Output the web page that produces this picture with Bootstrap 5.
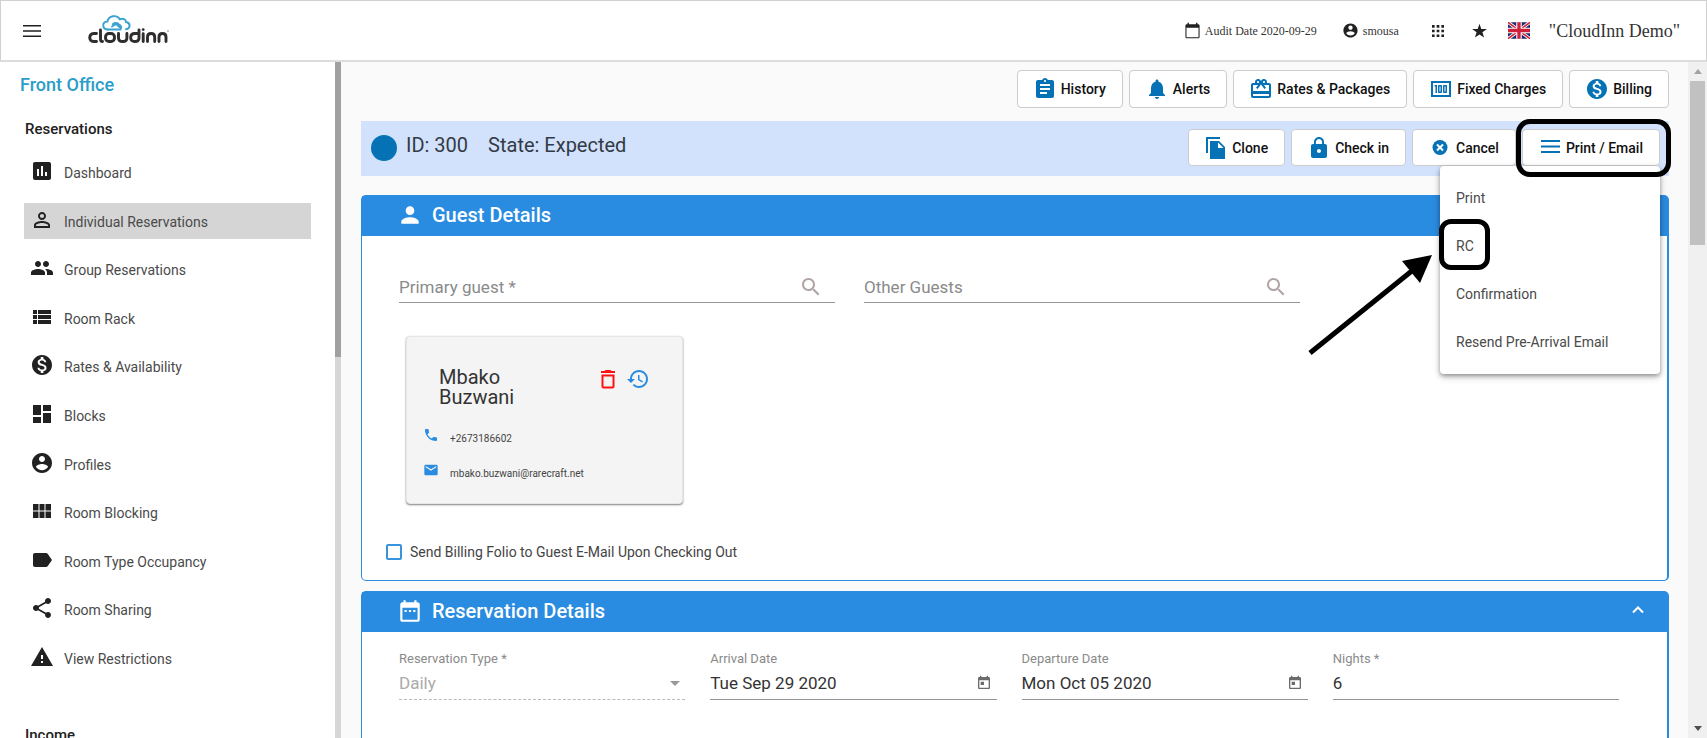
<!DOCTYPE html>
<html lang="en">
<head>
<meta charset="utf-8">
<meta name="viewport" content="width=device-width, initial-scale=1">
<title>CloudInn – Reservation 300</title>
<link href="https://cdn.jsdelivr.net/npm/bootstrap@5.3.0/dist/css/bootstrap.min.css" rel="stylesheet">
<style>
  :root { --brand: #2a8ce0; --deep: #0572b5; --ink: #212121; }
  body { font-family: Roboto, sans-serif; font-size: 14px; line-height: 20px; color: #4a4a4a; background: #fafafa; height: 100vh; overflow: hidden; }
  svg { fill: currentColor; flex: none; display: block; }
  a { color: inherit; text-decoration: none; }
  button { color: inherit; }

  /* top bar */
  .topbar { height: 62px; background: #fff; border: 1px solid #d0d0d0; border-bottom: 2px solid #dcdcdc; padding: 0 26px 0 19px; font-family: "Liberation Serif", serif; color: #333; }
  .plain { border: 0; background: none; padding: 0; }
  .topbar svg, .topbar .plain { color: var(--ink); }
  .tiny { font-size: 12px; line-height: 18px; }
  .brand-link { margin-left: 42px; }
  .usr { margin-left: 25px; }
  .apps { margin-left: 30px; }
  .star { margin-left: 24px; }
  .flag { margin-left: 20px; }
  .hotel { font-size: 18px; margin-left: 19px; }

  /* side menu */
  .side { width: 335px; background: #fff; overflow: hidden; }
  .side h1 { font-size: 18px; line-height: 24px; font-weight: 500; color: #2a9dc8; margin: 11px 0 0 20px; }
  .side h2 { font-size: 15px; line-height: 20px; font-weight: 500; color: var(--ink); margin: 22px 0 0 25px; }
  .side .income { margin-top: 49px; }
  .menu-list { padding: 0; margin: 15px 24px 0; list-style: none; height: 522px; display: flex; flex-direction: column; justify-content: space-between; }
  .menu-list a { display: flex; align-items: center; gap: 10px; height: 36px; padding: 2px 6px 0; }
  .menu-list a.on { background: #d5d5d5; }
  .menu-list svg { color: var(--ink); margin-top: -4px; }
  .rail { width: 6px; background: #d6d6d6; }
  .rail div { height: 295px; background: #a0a0a0; }
  .scroller { width: 19px; background: #f0f0f0; padding: 0 2px; }
  .scroller .thumb { height: 164px; background: #c1c1c1; width: 15px; }
  .scroller .cap { height: 19px; width: 15px; display: grid; place-items: center; color: #505050; }
  .scroller .cap.off { color: #a3a3a3; }

  /* toolbars */
  .work { padding: 8px 19px 0 20px; overflow: hidden; }
  .tools, .actions { gap: 6px; }
  .tool { background: #fff; border: 1px solid #ccc; border-radius: 4px; color: #111; font-weight: 500; height: 38px; display: flex; align-items: center; padding: 0 16px 0 15px; gap: 4px; white-space: nowrap; }
  .tool svg { color: var(--deep); }
  .statebar { background: #d2e2fc; height: 55px; margin-top: 13px; padding: 0 9px 2px 10px; }
  .dot { width: 26px; height: 26px; border-radius: 50%; background: var(--deep); }
  .state { font-size: 20px; line-height: 24px; color: #333a45; margin: -5px 0 0 9px; gap: 20px; }
  .actions .tool { height: 37px; }
  .ring { border: 5px solid #000; border-radius: 14px; position: absolute; pointer-events: none; }
  .ring.r1 { inset: -10px -11px -11px -6px; z-index: 1002; }
  .ring.r2 { left: -1px; top: 53px; width: 51px; height: 51px; border-radius: 12px; }
  .drop { position: absolute; top: 37px; right: 0; width: 220px; background: #fff; border-radius: 4px; padding: 8px 0; z-index: 1001; box-shadow: 0 2px 4px rgba(0,0,0,.35), 0 3px 8px rgba(0,0,0,.16); }
  .drop a { display: block; line-height: 48px; padding: 0 16px; }
  .pointer { position: absolute; right: 227px; top: 124px; z-index: 1001; color: #000; }

  /* panels */
  .panel { background: #fff; border: 1px solid var(--brand); border-right-width: 2px; border-radius: 5px; }
  .panel header { background: var(--brand); color: #fff; height: 40px; padding: 0 21px 2px 35px; }
  .panel header h2 { font-size: 20px; line-height: 24px; font-weight: 500; margin: 0 0 0 9px; }
  .guest { margin-top: 19px; }
  .stay { margin-top: 10px; height: 300px; }
  .fld { border-bottom: 1px solid #949494; height: 32px; display: flex; align-items: center; }
  .fld input, .fld select { border: 0; background: none; padding: 0; width: 100%; min-width: 0; font-size: 17px; line-height: 24px; color: #333; appearance: none; outline: 0; }
  .fld input::placeholder { color: #8a8a8a; opacity: 1; }
  .fld select:disabled { color: #aaa; opacity: 1; }
  .fld.dotted { border-bottom-style: dashed; border-color: #bbb; }
  .lens { color: #b0a4a4; margin-right: 12px; }
  .cal { color: #6b6b6b; margin-right: 5px; }
  .caret { color: #999; margin-right: 5px; }
  .lookups { padding: 35px 367px 0 37px; gap: 29px; }
  .stayrow { display: grid; grid-template-columns: repeat(4, 1fr); gap: 25px; padding: 17px 48px 0 37px; }
  .stayrow label { font-size: 13px; line-height: 20px; color: #8a8a8a; display: block; }
  .stayrow .fld { height: 31px; padding-bottom: 2px; }

  /* guest card */
  .person { width: 277px; height: 168px; margin: 33px 0 0 44px; background: #f4f4f4; border: 1px solid #e6e6e6; border-radius: 4px; box-shadow: 0 1px 2px rgba(0,0,0,.5); padding: 30px 32px 0 16px; }
  .person h3 { font-size: 20px; line-height: 20px; font-weight: 400; margin: 0 0 0 16px; width: 100px; color: #333; }
  .bin svg { color: #f11; }
  .past { margin-left: 6px; }
  .past svg { color: var(--brand); }
  .contact { font-size: 10px; line-height: 16px; color: #444; gap: 11px; }
  .contact svg { color: var(--brand); margin-top: -8px; }
  .phone { margin-top: 24px; }
  .mail { margin-top: 19px; }
  .send { margin: 38px 0 18px 24px; gap: 8px; color: #444; }
  .send input { appearance: none; width: 16px; height: 16px; border: 2px solid #3a94dc; border-radius: 2px; margin: 0; background: #fff; }
</style>
</head>
<body class="d-flex flex-column">

<svg width="0" height="0" class="position-absolute" aria-hidden="true">
  <symbol id="user-circle" viewBox="0 0 24 24"><path d="M12 2C6.48 2 2 6.48 2 12s4.480 10 10 10 10-4.480 10-10S17.520 2 12 2zm0 3c1.660 0 3 1.340 3 3s-1.340 3-3 3-3-1.340-3-3 1.340-3 3-3zm0 14.200c-2.500 0-4.710-1.280-6-3.220.03-1.990 4-3.080 6-3.080 1.990 0 5.970 1.090 6 3.080-1.290 1.940-3.500 3.220-6 3.220z"/></symbol>
  <symbol id="dollar" viewBox="0 0 24 24"><path d="M12 2C6.480 2 2 6.480 2 12s4.480 10 10 10 10-4.480 10-10S17.520 2 12 2zm1.410 16.090V20h-2.670v-1.930c-1.710-.36-3.160-1.460-3.270-3.400h1.960c.1 1.050.82 1.870 2.650 1.870 1.960 0 2.400-.98 2.400-1.590 0-.83-.44-1.610-2.670-2.140-2.480-.6-4.180-1.620-4.180-3.670 0-1.720 1.390-2.840 3.110-3.210V4h2.670v1.950c1.860.45 2.790 1.860 2.850 3.390H14.300c-.05-1.110-.64-1.870-2.220-1.870-1.500 0-2.400.68-2.400 1.640 0 .84.65 1.390 2.670 1.910s4.180 1.390 4.180 3.910c-.01 1.830-1.380 2.830-3.120 3.160z"/></symbol>
  <symbol id="search" viewBox="0 0 24 24"><path d="M15.500 14h-.79l-.28-.27C15.410 12.590 16 11.110 16 9.500 16 5.910 13.090 3 9.500 3S3 5.910 3 9.500 5.910 16 9.500 16c1.610 0 3.090-.59 4.230-1.570l.27.28v.79l5 4.990L20.490 19l-4.990-5zm-6 0C7.010 14 5 11.990 5 9.500S7.010 5 9.500 5 14 7.010 14 9.500 11.990 14 9.500 14z"/></symbol>
  <symbol id="today" viewBox="0 0 24 24"><path d="M19 3h-1V1h-2v2H8V1H6v2H5c-1.110 0-1.990.9-1.990 2L3 19c0 1.100.89 2 2 2h14c1.100 0 2-.9 2-2V5c0-1.100-.9-2-2-2zm0 16H5V8h14v11zM7 10h5v5H7z"/></symbol>
</svg>

<nav class="topbar d-flex align-items-center flex-shrink-0" aria-label="Top">
  <button class="plain" aria-label="Toggle menu"><svg width="24" height="24" viewBox="0 0 24 24"><path d="M3 18h18v-1.500H3V18zm0-5.200h18v-1.500H3v1.500zM3 6v1.500h18V6H3z"/></svg></button>
  <a href="#" aria-label="cloudinn" class="brand-link">
    <svg width="84" height="32" viewBox="0 0 84 32">
      <g fill="none" stroke="#3ba3d0" stroke-width="1.900" stroke-linecap="round">
        <path d="M22 14.500c-6 0-6.500-7.500-.6-8C22.500.5 31-.8 33.800 4.300 37 3 40 4.500 40 7c5.500 1 4 7 0 7.300"/>
        <path d="M22 14.500h12.500c1.500-2 .3-4.500-1.700-5-1-2-4-2-6-.3"/>
        <path d="M26 11.500l4-2.500 4 3.500"/>
      </g>
      <g fill="none" stroke="#2f2d2e" stroke-width="2.900" stroke-linecap="round" stroke-linejoin="round">
        <path d="M10.500 18.500H7.500c-5 0-5 8 0 8h3M14.500 15v9q0 2.500 2 2.500"/>
        <rect x="19.500" y="18.500" width="9" height="8" rx="3.500"/>
        <path d="M32.500 18.500v4.500q0 3.500 4.200 3.500t4.200-3.500v-4.500"/>
        <path d="M53 15v8q0 3.500-4.200 3.500T44.700 22.500t4.100-4H53"/>
        <path d="M57.200 18.800v7.700M61.500 26.500v-4.500q0-3.500 3.600-3.500t3.600 3.500v4.500M73 26.500v-4.500q0-3.500 3.500-3.500t3.500 3.500v4.500"/>
      </g>
      <circle cx="57.200" cy="14.600" r="1.400" fill="#2f2d2e"/><circle cx="82" cy="16" r=".8" fill="#777"/>
    </svg>
  </a>
  <span class="ms-auto d-flex align-items-center tiny">
    <svg width="17" height="17" viewBox="0 0 24 24" class="me-1"><path d="M20 3h-1V1h-2v2H7V1H5v2H4c-1.100 0-2 .9-2 2v16c0 1.100.9 2 2 2h16c1.100 0 2-.9 2-2V5c0-1.100-.9-2-2-2zm.5 18.500h-17V8h17v13.500z"/></svg>
    Audit Date 2020-09-29
  </span>
  <a href="#" class="d-flex align-items-center tiny gap-1 usr"><svg width="17" height="17"><use href="#user-circle"/></svg>smousa</a>
  <button class="plain apps" aria-label="Apps"><svg width="18" height="18" viewBox="0 0 24 24"><path d="M4 7.500h3.500V4H4v3.500zm6.200 12.500h3.600v-3.500h-3.600V20zM4 20h3.500v-3.500H4V20zm0-6.200h3.500v-3.600H4v3.600zm6.200 0h3.600v-3.600h-3.600v3.600zM16.500 4v3.500H20V4h-3.500zm-6.300 3.500h3.600V4h-3.600v3.500zm6.300 6.300H20v-3.600h-3.500v3.600zm0 6.200H20v-3.500h-3.500V20z"/></svg></button>
  <button class="plain star" aria-label="Favourites"><svg width="17" height="17" viewBox="0 0 24 24"><path d="M12 17.500 18.500 22l-2.400-7.500L22.500 10h-8L12 2.300 9.500 10h-8l6.400 4.500L5.500 22z"/></svg></button>
  <button class="plain flag" aria-label="English"><svg width="22" height="17" viewBox="0 0 60 45"><path fill="#1b2a6b" d="M0 0h60v45H0z"/><path stroke="#fff" stroke-width="9" d="M0 0l60 45M60 0L0 45"/><path stroke="#cf1f3a" stroke-width="4" d="M0 0l60 45M60 0L0 45"/><path stroke="#fff" stroke-width="15" d="M30 0v45M0 22.500h60"/><path stroke="#cf1f3a" stroke-width="9" d="M30 0v45M0 22.500h60"/></svg></button>
  <span class="hotel">"CloudInn Demo"</span>
</nav>

<div class="d-flex flex-grow-1 overflow-hidden">
  <aside class="side flex-shrink-0">
    <h1>Front Office</h1>
    <h2>Reservations</h2>
    <ul class="menu-list">
      <li><a href="#"><svg width="24" height="24" viewBox="0 0 24 24"><path d="M19 3H5c-1.100 0-2 .9-2 2v14c0 1.100.9 2 2 2h14c1.100 0 2-.9 2-2V5c0-1.100-.9-2-2-2zM9 17H7v-7h2v7zm4 0h-2V7h2v10zm4 0h-2v-4h2v4z"/></svg>Dashboard</a></li>
      <li><a href="#" class="on"><svg width="24" height="24" viewBox="0 0 24 24"><path d="M12 5.900a2.100 2.100 0 110 4.200 2.100 2.100 0 010-4.200m0 9c2.970 0 6.100 1.460 6.100 2.100v1.100H5.900V17c0-.64 3.130-2.100 6.100-2.100M12 4C9.790 4 8 5.790 8 8s1.790 4 4 4 4-1.790 4-4-1.790-4-4-4zm0 9c-2.670 0-8 1.340-8 4v3h16v-3c0-2.660-5.330-4-8-4z"/></svg>Individual Reservations</a></li>
      <li><a href="#"><svg width="24" height="24" viewBox="0 0 24 24"><path d="M16 11c1.660 0 2.990-1.340 2.990-3S17.660 5 16 5s-3 1.340-3 3 1.340 3 3 3zm-8 0c1.660 0 2.990-1.340 2.990-3S9.660 5 8 5 5 6.340 5 8s1.340 3 3 3zm0 2c-2.330 0-7 1.170-7 3.500V19h14v-2.500c0-2.330-4.670-3.500-7-3.500zm8 0c-.29 0-.62.02-.97.05 1.160.84 1.970 1.970 1.970 3.450V19h6v-2.500c0-2.330-4.670-3.500-7-3.500z"/></svg>Group Reservations</a></li>
      <li><a href="#"><svg width="24" height="24" viewBox="0 0 24 24"><path d="M3 14h4v-4H3v4zm0 5h4v-4H3v4zM3 9h4V5H3v4zm5 5h13v-4H8v4zm0 5h13v-4H8v4zM8 5v4h13V5H8z"/></svg>Room Rack</a></li>
      <li><a href="#"><svg width="24" height="24"><use href="#dollar"/></svg>Rates &amp; Availability</a></li>
      <li><a href="#"><svg width="24" height="24" viewBox="0 0 24 24"><path d="M3 13h8V3H3v10zm0 8h8v-6H3v6zm10 0h8V11h-8v10zm0-18v6h8V3h-8z"/></svg>Blocks</a></li>
      <li><a href="#"><svg width="24" height="24"><use href="#user-circle"/></svg>Profiles</a></li>
      <li><a href="#"><svg width="24" height="24" viewBox="0 0 24 24"><path d="M3 11.500h5.500V5H3v6.500zM3 19h5.500v-6.500H3V19zm6.500 0h5v-6.500h-5V19zm6 0H21v-6.500h-5.500V19zm-6-7.500h5V5h-5v6.500zM15.500 5v6.500H21V5h-5.500z"/></svg>Room Blocking</a></li>
      <li><a href="#"><svg width="24" height="24" viewBox="0 0 24 24"><path d="M17.630 5.840C17.270 5.330 16.670 5 16 5L5 5.010C3.900 5.010 3 5.900 3 7v10c0 1.100.9 1.990 2 1.990L16 19c.67 0 1.270-.33 1.630-.84L22 12l-4.370-6.160z"/></svg>Room Type Occupancy</a></li>
      <li><a href="#"><svg width="24" height="24" viewBox="0 0 24 24"><path d="M18 16.080c-.76 0-1.440.3-1.960.77L8.910 12.700c.05-.23.09-.46.09-.7s-.04-.47-.09-.7l7.050-4.110c.54.5 1.250.81 2.040.81 1.660 0 3-1.340 3-3s-1.340-3-3-3-3 1.340-3 3c0 .24.04.47.09.7L8.040 9.810C7.500 9.310 6.790 9 6 9c-1.660 0-3 1.340-3 3s1.340 3 3 3c.79 0 1.500-.31 2.040-.81l7.120 4.160c-.05.21-.08.43-.08.65 0 1.610 1.310 2.920 2.920 2.920s2.920-1.310 2.920-2.920-1.310-2.920-2.920-2.920z"/></svg>Room Sharing</a></li>
      <li><a href="#"><svg width="24" height="24" viewBox="0 0 24 24"><path d="M1 21h22L12 2 1 21zm12-3h-2v-2h2v2zm0-4h-2v-4h2v4z"/></svg>View Restrictions</a></li>
    </ul>
    <h2 class="income">Income</h2>
  </aside>
  <div class="rail flex-shrink-0"><div></div></div>

  <main class="work flex-grow-1">
    <div class="d-flex justify-content-end tools">
      <button class="tool"><svg width="24" height="24" viewBox="0 0 24 24"><path d="M19 3h-4.180C14.400 1.840 13.300 1 12 1c-1.300 0-2.400.84-2.820 2H5c-1.100 0-2 .9-2 2v14c0 1.100.9 2 2 2h14c1.100 0 2-.9 2-2V5c0-1.100-.9-2-2-2zm-7 0c.55 0 1 .45 1 1s-.45 1-1 1-1-.45-1-1 .45-1 1-1zm2 14H7v-2h7v2zm3-4H7v-2h10v2zm0-4H7V7h10v2z"/></svg>History</button>
      <button class="tool"><svg width="24" height="24" viewBox="0 0 24 24"><path d="M12 22c1.100 0 2-.9 2-2h-4c0 1.100.89 2 2 2zm6-6v-5c0-3.070-1.640-5.640-4.500-6.320V4c0-.83-.67-1.500-1.500-1.500s-1.500.67-1.500 1.500v.68C7.630 5.360 6 7.920 6 11v5l-2 2v1h16v-1l-2-2z"/></svg>Alerts</button>
      <button class="tool"><svg width="24" height="24" viewBox="0 0 24 24"><path d="M20 6h-2.180c.11-.31.18-.65.18-1 0-1.660-1.340-3-3-3-1.050 0-1.960.54-2.500 1.350l-.5.67-.5-.68C10.960 2.540 10.050 2 9 2 7.340 2 6 3.340 6 5c0 .35.07.69.18 1H4c-1.110 0-1.990.89-1.990 2L2 19c0 1.110.89 2 2 2h16c1.110 0 2-.89 2-2V8c0-1.110-.89-2-2-2zm-5-2c.55 0 1 .45 1 1s-.45 1-1 1-1-.45-1-1 .45-1 1-1zM9 4c.55 0 1 .45 1 1s-.45 1-1 1-1-.45-1-1 .45-1 1-1zm11 15H4v-2h16v2zm0-5H4V8h5.080L7 10.830 8.620 12 11 8.760l1-1.360 1 1.360L15.380 12 17 10.830 14.920 8H20v6z"/></svg>Rates &amp; Packages</button>
      <button class="tool"><svg width="24" height="24" viewBox="0 0 24 24"><path d="M15 16h2c.55 0 1-.45 1-1V9c0-.55-.45-1-1-1h-2c-.55 0-1 .45-1 1v6c0 .55.45 1 1 1zm.5-6.500h1v5h-1v-5zM10 16h2c.55 0 1-.45 1-1V9c0-.55-.45-1-1-1h-2c-.55 0-1 .45-1 1v6c0 .55.450 1 1 1zm.5-6.500h1v5h-1v-5zM5.500 8H8v8H6.500V9.500h-1zM2 4v16h20V4H2zm2 14V6h16v12H4z"/></svg>Fixed Charges</button>
      <button class="tool"><svg width="24" height="24"><use href="#dollar"/></svg>Billing</button>
    </div>

    <section class="statebar d-flex align-items-center">
      <span class="dot"></span>
      <div class="state d-flex"><span>ID: 300</span><span>State: Expected</span></div>
      <div class="actions d-flex ms-auto">
        <button class="tool"><svg width="24" height="24" viewBox="0 0 24 24"><path d="M16 1H2v16h2V3h12V1zm-1 4l6 6v12H6V5h9zm-1 7h5.500L14 6.500V12z"/></svg>Clone</button>
        <button class="tool"><svg width="24" height="24" viewBox="0 0 24 24"><path d="M18 8h-1V6c0-2.760-2.240-5-5-5S7 3.240 7 6v2H6c-1.100 0-2 .9-2 2v10c0 1.100.9 2 2 2h12c1.100 0 2-.9 2-2V10c0-1.100-.9-2-2-2zm-6 9c-1.100 0-2-.9-2-2s.9-2 2-2 2 .9 2 2-.9 2-2 2zm3.100-9H8.900V6c0-1.710 1.390-3.100 3.100-3.100 1.710 0 3.100 1.390 3.100 3.100v2z"/></svg>Check in</button>
        <button class="tool"><svg width="24" height="24" viewBox="0 0 24 24"><circle cx="12" cy="11.500" r="7.500"/><path stroke="#fff" stroke-width="2" d="M9 8.500l6 6M15 8.500l-6 6"/></svg>Cancel</button>
        <div class="position-relative">
          <button class="tool" aria-expanded="true"><svg width="24" height="24" viewBox="0 0 24 24"><path d="M3 4h19v2H3zM3 9.500h19v2H3zM3 15h19v2H3z"/></svg>Print / Email</button>
          <div class="drop">
            <a href="#">Print</a><a href="#">RC</a><a href="#">Confirmation</a><a href="#">Resend Pre-Arrival Email</a>
            <span class="ring r2"></span>
          </div>
          <svg class="pointer" width="125" height="104" viewBox="0 0 125 104"><path d="M2 100 105 17" stroke="#000" stroke-width="5"/><path d="M124 2 94 8l18 22z"/></svg>
          <span class="ring r1"></span>
        </div>
      </div>
    </section>

    <section class="panel guest">
      <header class="d-flex align-items-center"><svg width="26" height="26" viewBox="0 0 24 24"><path d="M12 12c2.210 0 4-1.790 4-4s-1.790-4-4-4-4 1.790-4 4 1.790 4 4 4zm0 2c-2.670 0-8 1.340-8 4v2h16v-2c0-2.660-5.330-4-8-4z"/></svg><h2>Guest Details</h2></header>
      <div class="lookups d-flex">
        <div class="fld flex-fill"><input type="text" placeholder="Primary guest *" aria-label="Primary guest"><svg width="24" height="24" class="lens"><use href="#search"/></svg></div>
        <div class="fld flex-fill"><input type="text" placeholder="Other Guests" aria-label="Other Guests"><svg width="24" height="24" class="lens"><use href="#search"/></svg></div>
      </div>
      <div class="person">
        <div class="d-flex align-items-start">
          <h3>Mbako Buzwani</h3>
          <button class="plain ms-auto bin" aria-label="Remove guest"><svg width="24" height="24" viewBox="0 0 24 24"><path d="M5.500 19.500c0 1.100.9 2 2 2h9c1.100 0 2-.9 2-2V7.500h-13v12zM7.500 9.500h9v10h-9v-10zM15.500 4l-1-1h-5l-1 1H5v2h14V4z"/></svg></button>
          <button class="plain past" aria-label="Guest history"><svg width="24" height="24" viewBox="0 0 24 24"><path d="M13 3c-4.970 0-9 4.030-9 9H1l3.890 3.890.07.14L9 12H6c0-3.870 3.130-7 7-7s7 3.130 7 7-3.130 7-7 7c-1.930 0-3.680-.79-4.940-2.060l-1.420 1.420C8.270 19.990 10.510 21 13 21c4.970 0 9-4.030 9-9s-4.030-9-9-9zm-1 5v5l4.280 2.540.72-1.210-3.500-2.080V8H12z"/></svg></button>
        </div>
        <div class="contact d-flex align-items-center phone"><svg width="16" height="16" viewBox="0 0 24 24"><path d="M6.620 10.790c1.440 2.830 3.760 5.140 6.590 6.590l2.200-2.200c.27-.27.67-.36 1.020-.24 1.120.37 2.330.57 3.570.57.55 0 1 .45 1 1V20c0 .55-.45 1-1 1-9.390 0-17-7.610-17-17 0-.55.45-1 1-1h3.500c.55 0 1 .45 1 1 0 1.250.2 2.450.57 3.570.11.35.03.74-.25 1.020l-2.200 2.200z"/></svg>+2673186602</div>
        <div class="contact d-flex align-items-center mail"><svg width="16" height="16" viewBox="0 0 24 24"><path d="M20 4H4c-1.100 0-1.990.9-1.990 2L2 18c0 1.100.9 2 2 2h16c1.100 0 2-.9 2-2V6c0-1.100-.9-2-2-2zm0 4l-8 5-8-5V6l8 5 8-5v2z"/></svg>mbako.buzwani@rarecraft.net</div>
      </div>
      <label class="send d-flex align-items-center"><input type="checkbox">Send Billing Folio to Guest E-Mail Upon Checking Out</label>
    </section>

    <section class="panel stay">
      <header class="d-flex align-items-center"><svg width="26" height="26" viewBox="0 0 24 24"><path d="M9 11H7v2h2v-2zm4 0h-2v2h2v-2zm4 0h-2v2h2v-2zm2-7h-1V2h-2v2H8V2H6v2H5c-1.110 0-1.990.9-1.990 2L3 20c0 1.100.89 2 2 2h14c1.100 0 2-.9 2-2V6c0-1.100-.9-2-2-2zm0 16H5V9h14v11z"/></svg><h2>Reservation Details</h2>
        <button class="plain ms-auto" aria-label="Collapse"><svg width="16" height="16" viewBox="0 0 16 16"><path d="M3 9.500 8 4.500l5 5" fill="none" stroke="#fff" stroke-width="2"/></svg></button></header>
      <div class="stayrow">
        <div><label for="rt">Reservation Type *</label><div class="fld dotted"><select id="rt" disabled><option>Daily</option></select><svg width="10" height="5" viewBox="0 0 10 5" class="caret"><path d="M0 0h10L5 5z"/></svg></div></div>
        <div><label for="ad">Arrival Date</label><div class="fld"><input id="ad" type="text" value="Tue Sep 29 2020"><svg width="16" height="16" class="cal"><use href="#today"/></svg></div></div>
        <div><label for="dd">Departure Date</label><div class="fld"><input id="dd" type="text" value="Mon Oct 05 2020"><svg width="16" height="16" class="cal"><use href="#today"/></svg></div></div>
        <div><label for="nt">Nights *</label><div class="fld"><input id="nt" type="text" value="6"></div></div>
      </div>
    </section>
  </main>

  <div class="scroller flex-shrink-0 d-flex flex-column" aria-hidden="true">
    <div class="cap off"><svg width="8" height="5" viewBox="0 0 8 5"><path d="M0 5h8L4 0z"/></svg></div>
    <div class="thumb"></div>
    <div class="cap mt-auto"><svg width="8" height="5" viewBox="0 0 8 5"><path d="M0 0h8L4 5z"/></svg></div>
  </div>
</div>
<script src="https://cdn.jsdelivr.net/npm/bootstrap@5.3.0/dist/js/bootstrap.bundle.min.js"></script>
</body>
</html>
